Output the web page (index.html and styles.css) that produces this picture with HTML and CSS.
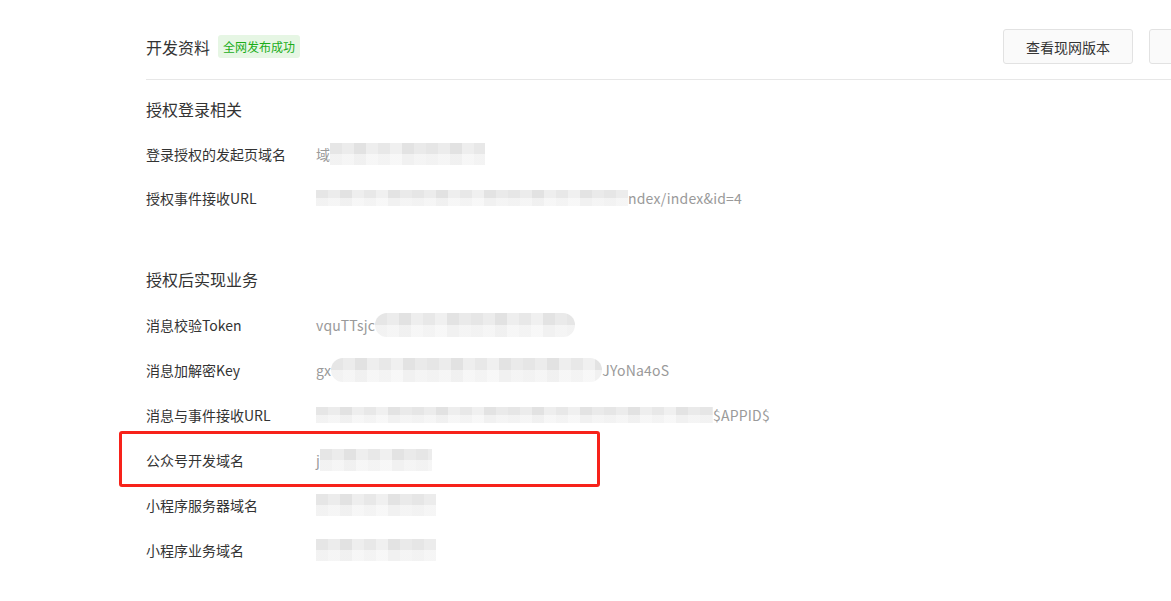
FILE: index.html
```html
<!DOCTYPE html>
<html>
<head>
  <title>开发资料</title>
  <link rel="stylesheet" href="styles.css">
</head>
<body>
  <div class="main">
    <div class="page-header">
      <div class="page-title">
        <h1>开发资料</h1>
        <span class="badge">全网发布成功</span>
      </div>
      <div class="header-actions">
        <button class="btn">查看现网版本</button>
        <button class="btn btn-cut" aria-label="更多"></button>
      </div>
    </div>

    <h2 class="section-title first">授权登录相关</h2>
    <ul class="info-list">
      <li class="info-row">
        <span class="info-label">登录授权的发起页域名</span>
        <span class="info-value">域<span class="mosaic w155"></span></span>
      </li>
      <li class="info-row">
        <span class="info-label">授权事件接收URL</span>
        <span class="info-value"><span class="mosaic w312 thin"></span>ndex/index&amp;id=4</span>
      </li>
    </ul>

    <h2 class="section-title">授权后实现业务</h2>
    <ul class="info-list">
      <li class="info-row">
        <span class="info-label">消息校验Token</span>
        <span class="info-value">vquTTsjc<span class="mosaic w200 round"></span></span>
      </li>
      <li class="info-row">
        <span class="info-label">消息加解密Key</span>
        <span class="info-value">gx<span class="mosaic w271 round"></span>JYoNa4oS</span>
      </li>
      <li class="info-row">
        <span class="info-label">消息与事件接收URL</span>
        <span class="info-value"><span class="mosaic w397 thin"></span>$APPID$</span>
      </li>
      <li class="info-row marked">
        <span class="info-label">公众号开发域名</span>
        <span class="info-value">j<span class="mosaic w112"></span></span>
      </li>
      <li class="info-row">
        <span class="info-label">小程序服务器域名</span>
        <span class="info-value"><span class="mosaic w120"></span></span>
      </li>
      <li class="info-row">
        <span class="info-label">小程序业务域名</span>
        <span class="info-value"><span class="mosaic w120"></span></span>
      </li>
    </ul>
  </div>
</body>
</html>
```

FILE: styles.css
```css
body {
  margin: 0;
  font-family: "Noto Sans CJK SC", "Liberation Sans", sans-serif;
  color: #333333;
  background-color: #ffffff;
  overflow: hidden;
}

.main {
  width: 1103px;
  margin-left: 146px;
}

/* Header */
.page-header {
  display: flex;
  align-items: center;
  justify-content: space-between;
  padding: 29px 0 15px;
  border-bottom: 1px solid #e7e7e7;
}
.page-title {
  display: flex;
  align-items: center;
  gap: 8px;
}
.page-title h1 {
  margin: 0;
  font-size: 16px;
  font-weight: normal;
  line-height: 24px;
}
.badge {
  display: inline-block;
  height: 23px;
  line-height: 23px;
  padding: 0 5px;
  font-size: 12px;
  color: #1aad19;
  background-color: #e6f6e4;
  border-radius: 3px;
}
.header-actions {
  display: flex;
  gap: 16px;
}
.btn {
  width: 130px;
  height: 35px;
  font-family: inherit;
  font-size: 14px;
  color: #353535;
  background-color: #fafafa;
  border: 1px solid #e2e2e2;
  border-radius: 3px;
  cursor: pointer;
}
.btn-cut {
  width: 100px;
}

/* Sections */
.section-title {
  margin: 47px 0 11px;
  font-size: 16px;
  font-weight: normal;
  line-height: 24px;
}
.section-title.first {
  margin-top: 17px;
}

.info-list {
  list-style: none;
  margin: 0;
  padding: 0;
}
.info-row {
  display: flex;
  align-items: center;
  height: 44px;
  font-size: 14px;
}
.info-list + .section-title + .info-list .info-row {
  height: 45px;
}
.info-label {
  width: 170px;
  flex-shrink: 0;
}
.info-value {
  display: flex;
  align-items: center;
  color: #9a9a9a;
  white-space: nowrap;
  letter-spacing: 0.2px;
}

/* Annotation box around a row */
.marked {
  position: relative;
}
.marked::after {
  content: "";
  position: absolute;
  left: -27px;
  top: -6px;
  width: 475px;
  height: 50px;
  border: 3px solid #f7221a;
  border-radius: 3px;
}

/* Pixelated (blurred-out) values */
.mosaic {
  display: inline-block;
  height: 22px;
  background:
    linear-gradient(180deg, rgba(255,255,255,0) 0 50%, rgba(255,255,255,0.5) 50% 100%),
    repeating-linear-gradient(90deg,
      #e6e6e6 0 12px, #ececec 12px 24px, #e2e2e2 24px 36px,
      #eeeeee 36px 48px, #e8e8e8 48px 60px, #f0f0f0 60px 72px,
      #e3e3e3 72px 84px, #eaeaea 84px 96px);
}
.mosaic.thin {
  height: 16px;
}
.mosaic.round {
  height: 24px;
  border-radius: 12px;
}
.w112 { width: 112px; }
.w120 { width: 120px; }
.w155 { width: 155px; }
.w200 { width: 200px; }
.w271 { width: 271px; }
.w312 { width: 312px; }
.w397 { width: 397px; }
```
